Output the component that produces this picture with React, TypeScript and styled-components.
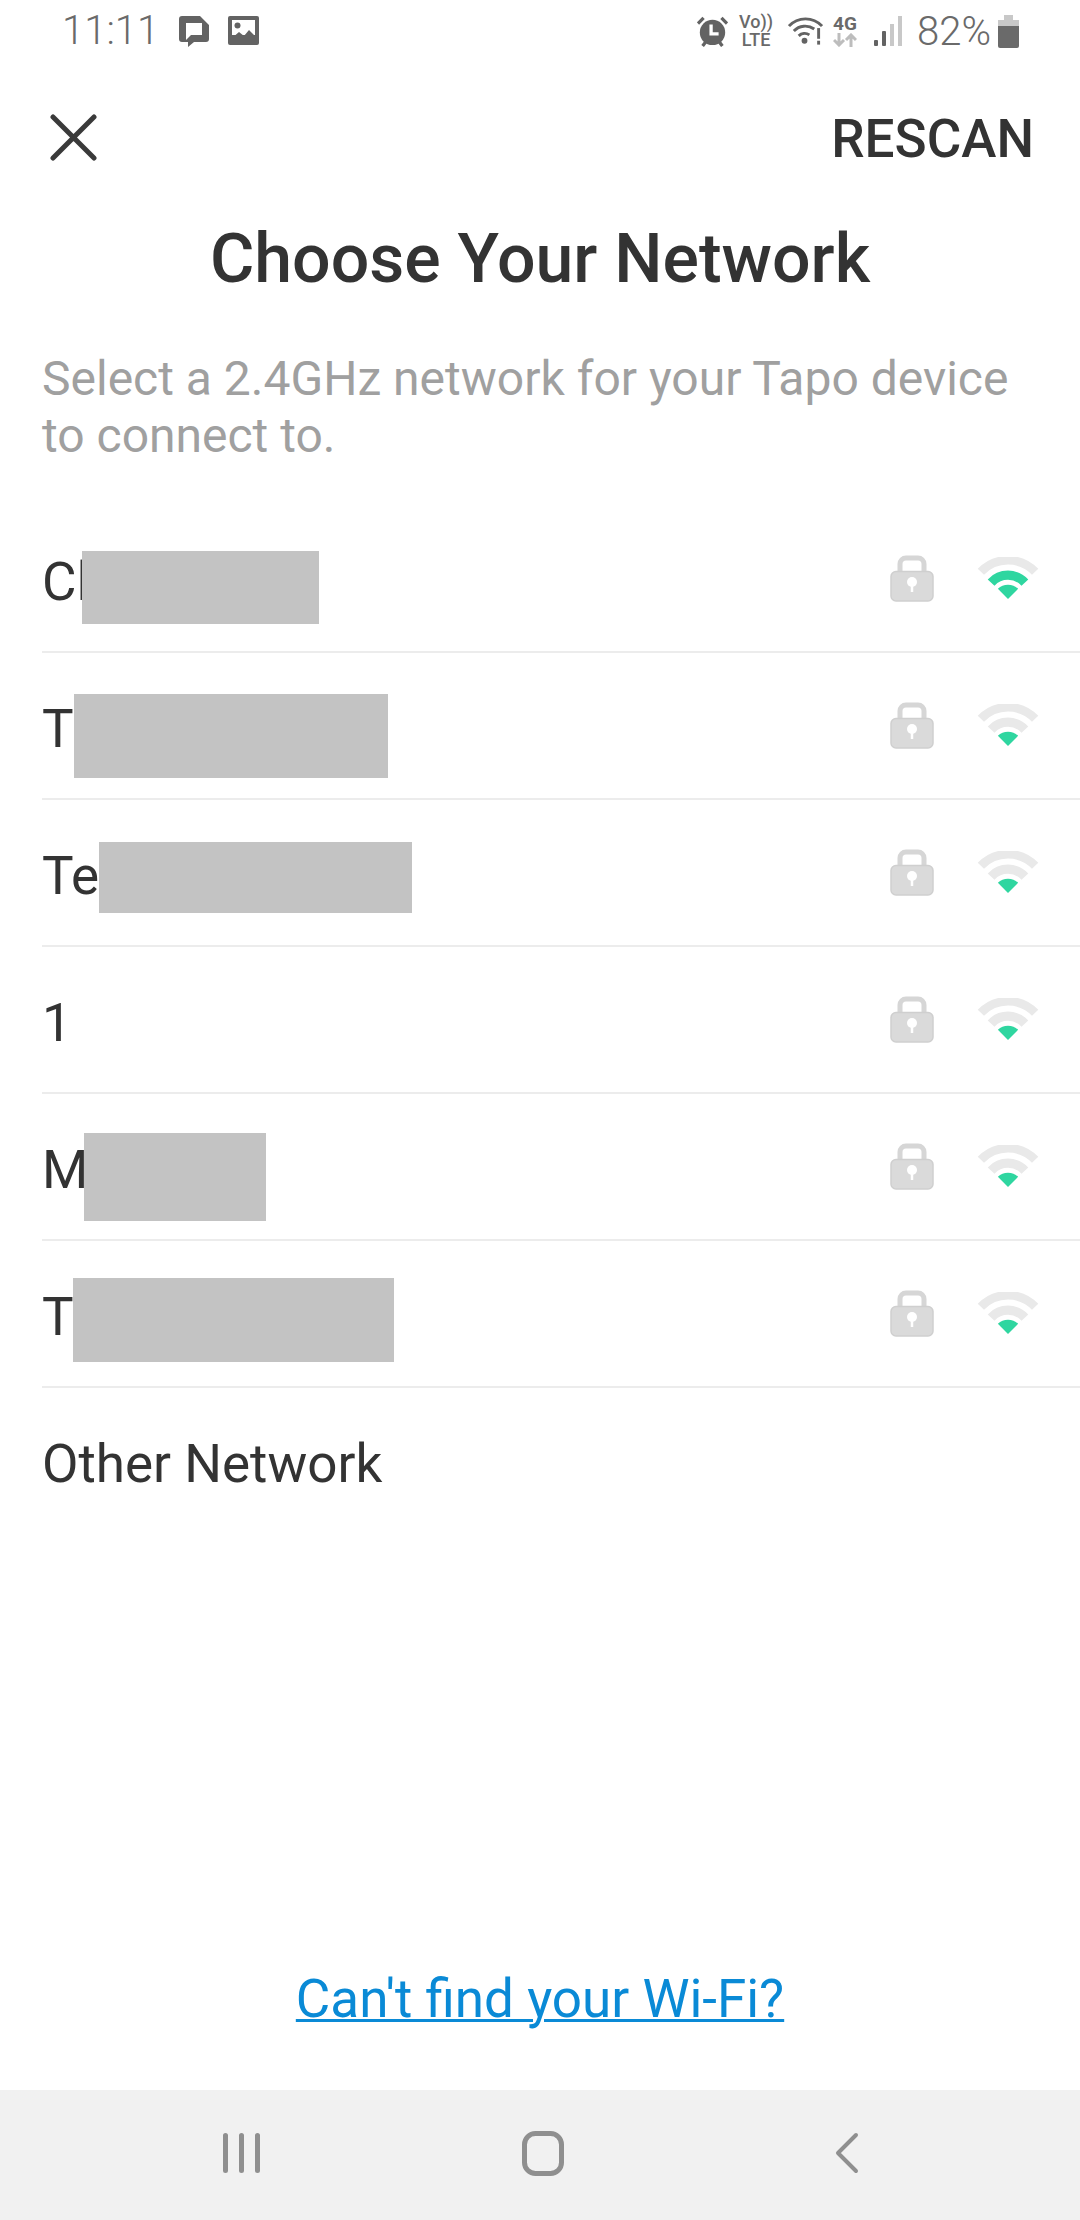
import React from "react";
import styled, { createGlobalStyle } from "styled-components";

const Global = createGlobalStyle`
  html, body { margin: 0; padding: 0; background: #fff; }
  body { font-family: Roboto, "Liberation Sans", sans-serif; }
  #root { width: 1080px; height: 2220px; }
`;

const Page = styled.div`
  width: 1080px;
  height: 2220px;
  display: flex;
  flex-direction: column;
  background: #fff;
  overflow: hidden;
`;

const StatusBar = styled.div`
  height: 62px;
  flex: none;
  display: flex;
  align-items: center;
  justify-content: space-between;
  padding: 0 61px 0 62px;
  color: #6a6a6a;
`;
const StatusGroup = styled.div`
  display: flex;
  align-items: center;
`;
const Time = styled.span`
  font-size: 40px;
  font-weight: 300;
  line-height: 62px;
  margin-right: 24px;
  width: 93px;
`;
const StatusIcon = styled.svg<{ $ml?: number }>`
  display: block;
  flex: none;
  margin-left: ${(p) => p.$ml ?? 0}px;
`;
const VoLte = styled.div`
  width: 32px;
  margin-left: 12px;
  display: flex;
  flex-direction: column;
  align-items: center;
  font-size: 18px;
  line-height: 18px;
  font-weight: 500;
  color: #6a6a6a;
  white-space: nowrap;
`;
const FourG = styled.div`
  margin-left: 10px;
  width: 24px;
  display: flex;
  flex-direction: column;
  align-items: center;
  font-size: 19px;
  line-height: 18px;
  font-weight: 700;
`;
const Percent = styled.span`
  font-size: 40px;
  font-weight: 300;
  margin-left: 15px;
  width: 70px;
`;

const Toolbar = styled.div`
  height: 151px;
  flex: none;
  display: flex;
  align-items: center;
  justify-content: space-between;
  padding: 0 46px 0 49px;
`;
const Rescan = styled.div`
  padding-top: 3px;
  font-size: 53px;
  font-weight: 500;
  color: #333;
`;
const Title = styled.h1`
  margin: 7px 0 0;
  text-align: center;
  font-size: 68px;
  line-height: 78px;
  font-weight: 500;
  color: #333;
`;
const Subtitle = styled.p`
  margin: 52px 42px 0;
  font-size: 48px;
  line-height: 57px;
  color: #a0a0a0;
`;
const List = styled.div`
  margin-top: 42px;
  padding-left: 42px;
`;
const Row = styled.div`
  position: relative;
  height: 145px;
  border-bottom: 2px solid #ececec;
  display: flex;
  align-items: center;
  justify-content: space-between;
  padding-right: 41px;
  font-size: 53px;
  color: #333;
`;
const LastRow = styled(Row)`
  border-bottom: none;
`;
const Name = styled.span`
  padding-top: 6px;
  line-height: 60px;
`;
const Icons = styled.div`
  display: flex;
  align-items: center;
  gap: 43px;
`;
const Redaction = styled.div<{ $l: number; $t: number; $w: number; $h: number }>`
  position: absolute;
  left: ${(p) => p.$l}px;
  top: ${(p) => p.$t}px;
  width: ${(p) => p.$w}px;
  height: ${(p) => p.$h}px;
  background: #c3c3c3;
`;
const Spacer = styled.div`
  flex: 1;
`;
const Help = styled.a`
  align-self: center;
  margin-bottom: 61px;
  font-size: 53px;
  line-height: 60px;
  color: #0a8ad6;
  text-decoration: underline;
  text-decoration-thickness: 3px;
`;
const NavBar = styled.div`
  height: 126px;
  flex: none;
  background: #f1f1f1;
  display: flex;
  align-items: center;
  padding: 0 0 4px 222px;
`;
const NavIcon = styled.svg<{ $ml?: number }>`
  display: block;
  flex: none;
  margin-left: ${(p) => p.$ml ?? 0}px;
`;

const Lock = () => (
  <svg width="44" height="47" viewBox="0 0 44 47">
    <path d="M10 20V9a6 6 0 0 1 6-6h12a6 6 0 0 1 6 6v11" fill="none" stroke="#d6d6d6" strokeWidth="5" />
    <rect x="1" y="16.5" width="42" height="29.5" rx="5" fill="#dadada" stroke="#cfcfcf" strokeWidth="1.5" />
    <circle cx="22" cy="27" r="5" fill="#fff" />
    <path d="M22 28v9" stroke="#fff" strokeWidth="2.5" />
  </svg>
);

const Wifi = ({ level }: { level: 1 | 2 }) => (
  <svg width="62" height="43" viewBox="0 0 60 42">
    <path d="M3.5 14.5A36.7 36.7 0 0 1 56.5 14.5" fill="none" stroke="#e9e9e9" strokeWidth="8.5" />
    <path d="M13.5 25A22.5 22.5 0 0 1 46.5 25" fill="none" stroke={level === 2 ? "#2fd6a0" : "#e9e9e9"} strokeWidth="9" />
    <path d="M30 41L20.1 31.1A14 14 0 0 1 39.9 31.1Z" fill="#2fd6a0" />
  </svg>
);

const rows: { name: string; level: 1 | 2; box?: [number, number, number, number] }[] = [
  { name: "Cl", level: 2, box: [40, 45, 237, 73] },
  { name: "T", level: 1, box: [32, 41, 314, 84] },
  { name: "Te", level: 1, box: [57, 42, 313, 71] },
  { name: "1", level: 1 },
  { name: "M", level: 1, box: [42, 39, 182, 88] },
  { name: "T", level: 1, box: [31, 37, 321, 84] },
];

export default function App() {
  return (
    <Page>
      <Global />
      <StatusBar>
        <StatusGroup>
          <Time>11:11</Time>
          <StatusIcon width="31" height="31" viewBox="0 0 31 31">
            <path d="M3 0h18l9 9v14a3 3 0 0 1-3 3H15l-6 5v-5H3a3 3 0 0 1-3-3V3a3 3 0 0 1 3-3z" fill="#636363" />
            <rect x="7" y="7" width="16" height="12" fill="#fff" />
            <path d="M7 18v6l5-5z" fill="#fff" />
          </StatusIcon>
          <StatusIcon $ml={18} width="31" height="30" viewBox="0 0 31 30">
            <rect width="31" height="29" rx="2" fill="#636363" />
            <rect x="4" y="4" width="23" height="15" fill="#fff" />
            <circle cx="9.5" cy="9.5" r="3" fill="#636363" />
            <path d="M4 22l7-6 5 4 5-6 6 6v4H4z" fill="#636363" />
          </StatusIcon>
        </StatusGroup>
        <StatusGroup>
          <StatusIcon width="31" height="31" viewBox="0 0 33 33">
            <circle cx="16.5" cy="17.5" r="13.5" fill="#636363" />
            <path d="M15 9v10h8" fill="none" stroke="#fff" strokeWidth="3.5" />
            <path d="M1 8l6-6M32 8l-6-6M6 32l3-4M27 32l-3-4" stroke="#636363" strokeWidth="3.5" />
          </StatusIcon>
          <VoLte>
            <span>Vo))</span>
            <span>LTE</span>
          </VoLte>
          <StatusIcon $ml={16} width="35" height="30" viewBox="0 0 36 30">
            <path d="M1 10a23 23 0 0 1 34 0M6 15a16 16 0 0 1 21-2M11 20a9 9 0 0 1 11-1" fill="none" stroke="#636363" strokeWidth="3" />
            <circle cx="17" cy="25" r="3" fill="#636363" />
            <rect x="30" y="12" width="3" height="11" fill="#636363" />
            <rect x="30" y="25" width="3" height="4" fill="#636363" />
          </StatusIcon>
          <FourG>
            <span>4G</span>
            <StatusIcon width="24" height="14" viewBox="0 0 24 14">
              <path d="M6 0v12M1 7l5 5 5-5M18 14V2M13 7l5-5 5 5" fill="none" stroke="#bdbdbd" strokeWidth="3" />
            </StatusIcon>
          </FourG>
          <StatusIcon $ml={17} width="28" height="31" viewBox="0 0 28 31">
            <rect x="0" y="24" width="4" height="6" rx="1" fill="#636363" />
            <rect x="8" y="15" width="4" height="15" rx="1" fill="#636363" />
            <rect x="16" y="8" width="4" height="22" fill="#c8c8c8" />
            <rect x="24" y="0" width="4" height="30" fill="#c8c8c8" />
          </StatusIcon>
          <Percent>82%</Percent>
          <StatusIcon $ml={11} width="21" height="33" viewBox="0 0 21 33">
            <path d="M6 0h9v5h6v6H0V5h6z" fill="#c8c8c8" />
            <path d="M0 11h21v20a2 2 0 0 1-2 2H2a2 2 0 0 1-2-2z" fill="#6a6a6a" />
          </StatusIcon>
        </StatusGroup>
      </StatusBar>
      <Toolbar>
        <svg width="48" height="48" viewBox="0 0 48 48">
          <path d="M4 3l41 41M45 3L4 44" stroke="#3a3a3a" strokeWidth="5" strokeLinecap="round" />
        </svg>
        <Rescan>RESCAN</Rescan>
      </Toolbar>
      <Title>Choose Your Network</Title>
      <Subtitle>
        Select a 2.4GHz network for your Tapo device
        <br />
        to connect to.
      </Subtitle>
      <List>
        {rows.map((r, i) => (
          <Row key={i}>
            <Name>{r.name}</Name>
            {r.box && <Redaction $l={r.box[0]} $t={r.box[1]} $w={r.box[2]} $h={r.box[3]} />}
            <Icons>
              <Lock />
              <Wifi level={r.level} />
            </Icons>
          </Row>
        ))}
        <LastRow>
          <Name>Other Network</Name>
        </LastRow>
      </List>
      <Spacer />
      <Help>Can't find your Wi-Fi?</Help>
      <NavBar>
        <NavIcon width="40" height="42" viewBox="0 0 40 42">
          <path d="M3.5 3.5v35M19.5 3.5v35M35.5 3.5v35" stroke="#8f8f8f" strokeWidth="5" strokeLinecap="round" />
        </NavIcon>
        <NavIcon $ml={260} width="42" height="45" viewBox="0 0 42 45">
          <rect x="2.5" y="2.5" width="37" height="40" rx="11" fill="none" stroke="#8f8f8f" strokeWidth="5" />
        </NavIcon>
        <NavIcon $ml={268} width="28" height="42" viewBox="0 0 28 42">
          <path d="M24 3L6 21l18 18" fill="none" stroke="#8f8f8f" strokeWidth="4" strokeLinecap="round" strokeLinejoin="round" />
        </NavIcon>
      </NavBar>
    </Page>
  );
}
